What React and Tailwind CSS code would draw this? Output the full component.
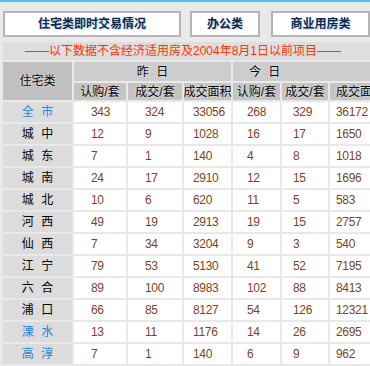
import React from "react";

const rows = [
  { name: "全 市", link: true, v: [343, 324, 33056, 268, 329, 36172] },
  { name: "城 中", v: [12, 9, 1028, 16, 17, 1650] },
  { name: "城 东", v: [7, 1, 140, 4, 8, 1018] },
  { name: "城 南", v: [24, 17, 2910, 12, 15, 1696] },
  { name: "城 北", v: [10, 6, 620, 11, 5, 583] },
  { name: "河 西", v: [49, 19, 2913, 19, 15, 2757] },
  { name: "仙 西", v: [7, 34, 3204, 9, 3, 540] },
  { name: "江 宁", v: [79, 53, 5130, 41, 52, 7195] },
  { name: "六 合", v: [89, 100, 8983, 102, 88, 8413] },
  { name: "浦 口", v: [66, 85, 8127, 54, 126, 12321] },
  { name: "溧 水", link: true, v: [13, 11, 1176, 14, 26, 2695] },
  { name: "高 淳", link: true, v: [7, 1, 140, 6, 9, 962] },
];

// left padding of each number column, read off the screenshot
const pads = ["pl-[17px]", "pl-[17px]", "pl-[9px]", "pl-[14px]", "pl-[11px]", "pl-[6px]"];

const subHeads = ["认购/套", "成交/套", "成交面积", "认购/套", "成交/套", "成交面积"];

function TabButton({ label, width }) {
  return (
    <div
      className={`${width} h-[26px] border-2 border-[#b4b4b4] bg-white flex items-center justify-center text-[12px] font-bold text-[#0d2b4f] [text-shadow:1px_1px_0_#c9dcec]`}
    >
      {label}
    </div>
  );
}

export default function App() {
  return (
    <div className="w-[370px] h-[366px] overflow-hidden bg-[#e9e9e9] font-['Liberation_Sans','Noto_Sans_CJK_SC',sans-serif]">
      <div className="h-[2px] bg-[#57c2e6]" />
      <div className="h-px bg-[#cdeaf4]" />

      <div className="flex mt-[8px] pl-[3px]">
        <TabButton label="住宅类即时交易情况" width="w-[178px]" />
        <div className="ml-[9px]">
          <TabButton label="办公类" width="w-[70px]" />
        </div>
        <div className="ml-[11px]">
          <TabButton label="商业用房类" width="w-[99px]" />
        </div>
      </div>

      <div className="ml-[3px] mt-[5px] h-[18px] bg-[#dedede] flex items-center pl-[22px] text-[12px] text-[#ff3300] whitespace-nowrap">
        ——以下数据不含经济适用房及2004年8月1日以前项目——
      </div>

      <div className="ml-[3px] mt-[2px] grid grid-cols-[69px_52px_54px_47px_47px_46px_60px] grid-rows-[19px_17px_repeat(12,20px)] gap-[2px] text-[12px]">
        <div className="row-span-2 bg-[#c0c0c0] flex items-center justify-center text-black [text-shadow:0_0_2px_#fff]">
          住宅类
        </div>
        <div className="col-span-3 bg-[#cdcdcd] flex items-center justify-center text-black [word-spacing:4px] [text-shadow:0_0_2px_#fff]">
          昨 日
        </div>
        <div className="col-span-3 bg-[#cdcdcd] flex items-center pl-[16px] text-black [word-spacing:4px] [text-shadow:0_0_2px_#fff]">
          今 日
        </div>
        {subHeads.map((h, i) => (
          <div
            key={i}
            className="bg-[#c4c4c4] flex items-center justify-center whitespace-nowrap text-black [text-shadow:0_0_2px_#fff]"
          >
            {h}
          </div>
        ))}

        {rows.map((r) => (
          <React.Fragment key={r.name}>
            <div
              className={`bg-[#dcdcdc] flex items-center justify-center [word-spacing:4px] ${
                r.link ? "text-[#1a86e0]" : "text-black"
              }`}
            >
              {r.name}
            </div>
            {r.v.map((n, i) => (
              <div
                key={i}
                className={`bg-white flex items-center ${pads[i]} text-[#7a451b] tracking-[-0.3px]`}
              >
                {n}
              </div>
            ))}
          </React.Fragment>
        ))}
      </div>
    </div>
  );
}
